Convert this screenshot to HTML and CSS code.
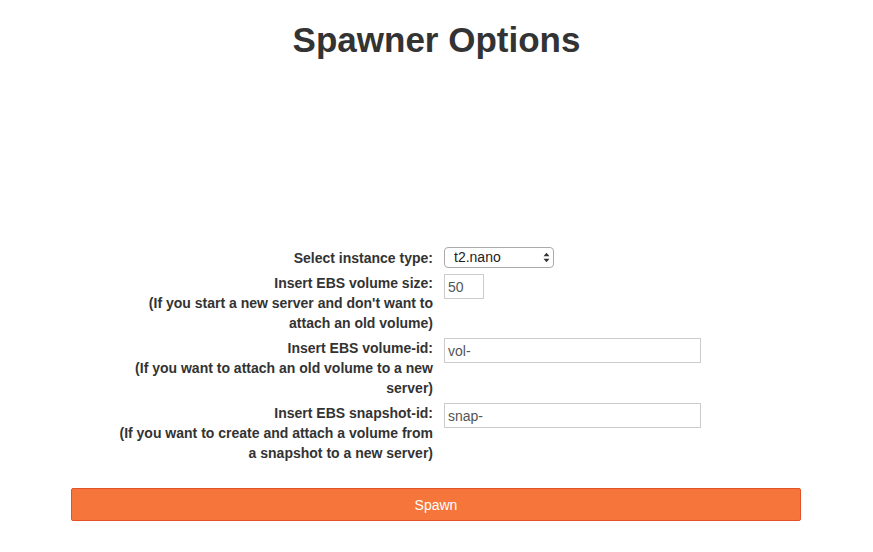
FILE: index.html
```html
<!DOCTYPE html>
<html>
<head>
<meta charset="utf-8">
<link rel="stylesheet" href="styles.css">
</head>
<body>
<div class="page">
  <h1 class="title">Spawner Options</h1>
  <form class="form">
    <div class="grid">
      <label class="label" for="itype">Select instance type:</label>
      <div class="field">
        <div class="select-wrap">
          <select id="itype" class="select">
            <option>t2.nano</option>
          </select>
          <svg class="arrows" width="7" height="11" viewBox="0 0 7 11"><path d="M0.5 4.2 L3.5 0.8 L6.5 4.2 Z M0.5 6.8 L3.5 10.2 L6.5 6.8 Z" fill="#333"/></svg>
        </div>
      </div>

      <label class="label" for="vsize">Insert EBS volume size:<br>(If you start a new server and don't want to<br>attach an old volume)</label>
      <div class="field"><input id="vsize" class="input small" type="text" value="50"></div>

      <label class="label" for="vid">Insert EBS volume-id:<br>(If you want to attach an old volume to a new<br>server)</label>
      <div class="field"><input id="vid" class="input wide" type="text" value="vol-"></div>

      <label class="label" for="sid">Insert EBS snapshot-id:<br>(If you want to create and attach a volume from<br>a snapshot to a new server)</label>
      <div class="field"><input id="sid" class="input wide" type="text" value="snap-"></div>
    </div>
    <button type="button" class="spawn">Spawn</button>
  </form>
</div>
</body>
</html>
```
FILE: styles.css
```css
html, body {
  margin: 0;
  padding: 0;
  background: #fff;
}
body {
  font-family: "Liberation Sans", Arial, Helvetica, sans-serif;
  color: #333;
  font-size: 14px;
}
.page {
  width: 873px;
  height: 552px;
  overflow: hidden;
}
.title {
  margin: 0;
  padding-top: 18px;
  text-align: center;
  font-size: 35px;
  line-height: 44px;
  font-weight: bold;
  color: #333;
}
.form {
  margin-top: 186px;
}
.grid {
  display: grid;
  grid-template-columns: 320px 260px;
  column-gap: 11px;
  row-gap: 5px;
  margin-left: 113px;
}
.label {
  text-align: right;
  font-weight: bold;
  font-size: 14px;
  line-height: 20px;
  color: #333;
}
.field {
  display: flex;
  align-items: flex-start;
}
.select-wrap {
  position: relative;
  width: 110px;
  height: 21px;
  margin-top: -1px;
}
.select {
  -webkit-appearance: none;
  appearance: none;
  width: 110px;
  height: 21px;
  box-sizing: border-box;
  border: 1px solid #aaa;
  border-radius: 4px;
  background: #fff;
  font-family: "Liberation Sans", Arial, sans-serif;
  font-size: 14px;
  color: #222;
  padding: 0 0 0 9px;
  margin: 0;
  line-height: 19px;
}
.arrows {
  position: absolute;
  right: 4px;
  top: 5px;
  pointer-events: none;
}
.input {
  box-sizing: border-box;
  height: 25px;
  border: 1px solid #ccc;
  border-radius: 0;
  padding: 0 3px;
  margin: 0;
  font-family: "Liberation Sans", Arial, sans-serif;
  font-size: 14px;
  color: #555;
  background: #fff;
}
.small {
  width: 40px;
  margin-top: 1px;
}
.wide {
  width: 257px;
}
.spawn {
  display: block;
  box-sizing: border-box;
  width: 730px;
  height: 33px;
  margin: 25px 0 0 71px;
  background: #f5753a;
  border: 1px solid #e4522a;
  border-radius: 2px;
  color: #fff;
  font-family: "Liberation Sans", Arial, sans-serif;
  font-size: 14px;
  padding: 0;
}
```
